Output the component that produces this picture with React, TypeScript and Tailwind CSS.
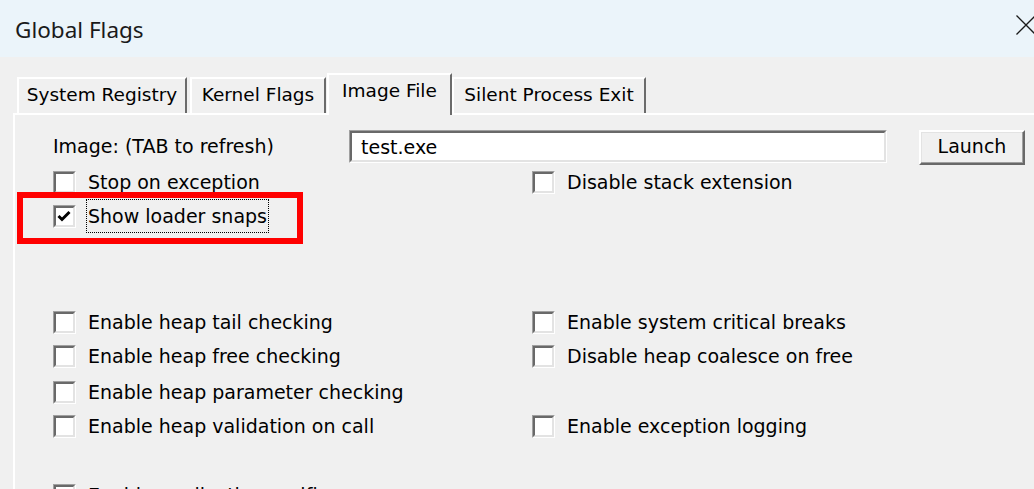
import clsx from 'clsx'

interface TabProps {
  label: string
  width: string
  selected?: boolean
  className?: string
}

const Tab = ({ label, width, selected, className }: TabProps) => {
  return (
    <div
      className={clsx(
        'flex items-center justify-center border-t-2 border-l-2 border-r-2 border-t-white border-l-white border-r-[#6b6b6b] bg-[#f0f0f0] text-[18.5px] pb-[2px]',
        selected ? 'relative z-10 h-[42px] -mb-[2px] pb-[8px]' : 'h-[36px]',
        width,
        className
      )}
    >
      {label}
    </div>
  )
}

const CheckBox = ({ checked }: { checked?: boolean }) => {
  return (
    <div className="w-[23px] h-[23px] shrink-0 border border-t-[#a0a0a0] border-l-[#a0a0a0] border-b-white border-r-white">
      <div className="w-full h-full flex items-center justify-center bg-white border-2 border-t-[#696969] border-l-[#696969] border-b-[#e3e3e3] border-r-[#e3e3e3]">
        {checked && (
          <svg width="17" height="17" viewBox="0 0 17 17">
            <polyline
              points="2.5,8 6,11.5 13.5,4"
              fill="none"
              stroke="#000"
              strokeWidth="3"
            />
          </svg>
        )}
      </div>
    </div>
  )
}

interface FlagProps {
  label?: string
  checked?: boolean
  focused?: boolean
}

const Flag = ({ label, checked, focused }: FlagProps) => {
  if (!label) return <div />

  return (
    <div className="flex items-center h-[34px]">
      <CheckBox checked={checked} />
      <span
        className={clsx(
          'h-full flex items-center',
          focused ? 'ml-[10px] px-[1px] border border-dotted border-black' : 'ml-[12px]'
        )}
      >
        {label}
      </span>
    </div>
  )
}

const App = () => {
  return (
    <div className="w-[1034px] h-[489px] overflow-hidden bg-[#f0f0f0] text-black font-['DejaVu_Sans',sans-serif] text-[19px]">
      {/* title bar */}
      <div className="h-[57px] flex items-center justify-between pl-[15px] bg-[#ebf4fa]">
        <span className="font-['Noto_Sans',sans-serif] text-[22.5px] text-[#1a1a1a] pt-[3px]">Global Flags</span>
        <svg width="20" height="20" viewBox="0 0 20 20" className="-mr-[2px] mb-[8px]">
          <path d="M0.5 0.5 L19.5 19.5 M19.5 0.5 L0.5 19.5" stroke="#1a1a1a" strokeWidth="1.3" />
        </svg>
      </div>

      <div className="pl-[13px] pt-[16px]">
        {/* tabs */}
        <div className="flex items-end h-[40px] pl-[4px]">
          <Tab label="System Registry" width="w-[170px]" />
          <Tab label="Kernel Flags" width="w-[136px]" className="ml-[3px]" />
          <Tab label="Image File" width="w-[125px]" className="ml-[1px]" selected />
          <Tab label="Silent Process Exit" width="w-[194px]" />
        </div>

        {/* panel */}
        <div className="h-[400px] border-t-2 border-l-2 border-white pl-[38px] pt-[15px]">
          <div className="flex items-start">
            <span className="w-[296px] h-[33px] flex items-center pb-[1px]">Image: (TAB to refresh)</span>
            <div className="w-[538px] h-[33px] border border-t-[#a0a0a0] border-l-[#a0a0a0] border-b-white border-r-white">
              <div className="w-full h-full flex items-center pl-[9px] pt-[2px] bg-white border-2 border-t-[#696969] border-l-[#696969] border-b-[#e3e3e3] border-r-[#e3e3e3]">
                test.exe
              </div>
            </div>
            <button className="ml-[32px] w-[106px] h-[35px] flex items-center justify-center pb-[3px] border-2 border-t-white border-l-white border-b-[#696969] border-r-[#696969] bg-[#f0f0f0] shadow-[inset_-1px_-1px_0_#a0a0a0,inset_1px_1px_0_#e3e3e3]">
              Launch
            </button>
          </div>

          <div className="grid grid-cols-[479px_1fr]">
            <Flag label="Stop on exception" />
            <Flag label="Disable stack extension" />

            <div className="relative">
              <Flag label="Show loader snaps" checked focused />
              <div className="absolute -left-[36px] -top-[7px] w-[286px] h-[52px] border-[6px] border-[#ff0000]" />
            </div>
            <Flag />

            <div className="h-[72px]" />
            <div />

            <Flag label="Enable heap tail checking" />
            <Flag label="Enable system critical breaks" />
            <Flag label="Enable heap free checking" />
            <Flag label="Disable heap coalesce on free" />

            <div className="mt-[2px]">
              <Flag label="Enable heap parameter checking" />
            </div>
            <div />
            <Flag label="Enable heap validation on call" />
            <Flag label="Enable exception logging" />

            <div className="h-[35px]" />
            <div />

            <Flag label="Enable application verifier" />
            <Flag />
          </div>
        </div>
      </div>
    </div>
  )
}

export default App
